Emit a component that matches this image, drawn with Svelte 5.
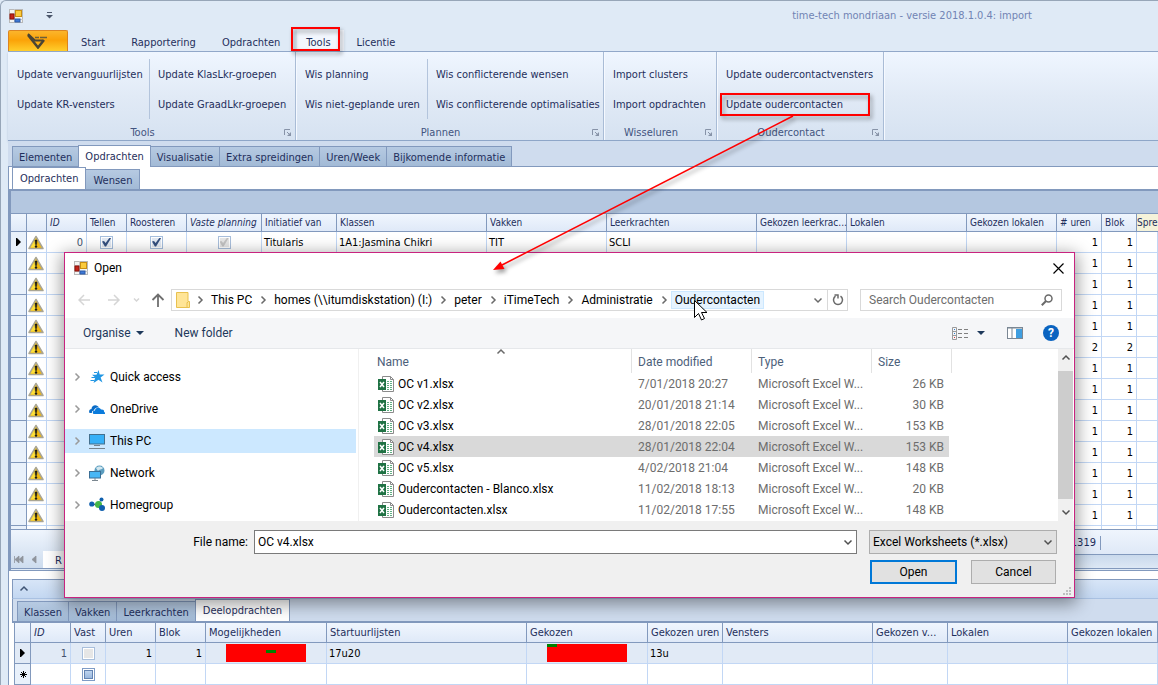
<script lang="ts">
	type RibbonColumn = { width: number; items: string[] };
	type RibbonGroup = { caption: string; columns: RibbonColumn[] };

	const menu = ["Start", "Rapportering", "Opdrachten", "Tools", "Licentie"];

	const groups: RibbonGroup[] = [
		{
			caption: "Tools",
			columns: [
				{ width: 141, items: ["Update vervanguurlijsten", "Update KR-vensters"] },
				{ width: 146, items: ["Update KlasLkr-groepen", "Update GraadLkr-groepen"] },
			],
		},
		{
			caption: "Plannen",
			columns: [
				{ width: 131, items: ["Wis planning", "Wis niet-geplande uren"] },
				{ width: 176, items: ["Wis conflicterende wensen", "Wis conflicterende optimalisaties"] },
			],
		},
		{
			caption: "Wisseluren",
			columns: [{ width: 112, items: ["Import clusters", "Import opdrachten"] }],
		},
		{
			caption: "Oudercontact",
			columns: [{ width: 166, items: ["Update oudercontactvensters", "Update oudercontacten"] }],
		},
	];

	const pages = ["Elementen", "Opdrachten", "Visualisatie", "Extra spreidingen", "Uren/Week", "Bijkomende informatie"];
	const subpages = ["Opdrachten", "Wensen"];
	const detailPages = ["Klassen", "Vakken", "Leerkrachten", "Deelopdrachten"];

	const columns = [
		{ title: "", width: 16 },
		{ title: "", width: 20 },
		{ title: "ID", width: 40, italic: true },
		{ title: "Tellen", width: 40 },
		{ title: "Roosteren", width: 60 },
		{ title: "Vaste planning", width: 75, italic: true },
		{ title: "Initiatief van", width: 75 },
		{ title: "Klassen", width: 150 },
		{ title: "Vakken", width: 120 },
		{ title: "Leerkrachten", width: 150 },
		{ title: "Gekozen leerkrac...", width: 90 },
		{ title: "Lokalen", width: 120 },
		{ title: "Gekozen lokalen", width: 90 },
		{ title: "# uren", width: 45 },
		{ title: "Blok", width: 35 },
		{ title: "Spre", width: 0, beige: true },
	];
	const moreRows = [1, 1, 1, 1, 2, 1, 1, 1, 1, 1, 1, 1, 1];

	const detailColumns = [
		{ title: "", width: 16 },
		{ title: "ID", width: 40, italic: true },
		{ title: "Vast", width: 35 },
		{ title: "Uren", width: 50 },
		{ title: "Blok", width: 50 },
		{ title: "Mogelijkheden", width: 121 },
		{ title: "Startuurlijsten", width: 200 },
		{ title: "Gekozen", width: 121 },
		{ title: "Gekozen uren", width: 75 },
		{ title: "Vensters", width: 150 },
		{ title: "Gekozen v...", width: 75 },
		{ title: "Lokalen", width: 120 },
		{ title: "Gekozen lokalen", width: 0 },
	];

	const crumbs = ["This PC", "homes (\\\\itumdiskstation) (I:)", "peter", "iTimeTech", "Administratie", "Oudercontacten"];
	const places = ["Quick access", "OneDrive", "This PC", "Network", "Homegroup"];

	const files = [
		{ name: "OC v1.xlsx", date: "7/01/2018 20:27", size: "26 KB" },
		{ name: "OC v2.xlsx", date: "20/01/2018 21:14", size: "30 KB" },
		{ name: "OC v3.xlsx", date: "28/01/2018 22:05", size: "153 KB" },
		{ name: "OC v4.xlsx", date: "28/01/2018 22:04", size: "153 KB" },
		{ name: "OC v5.xlsx", date: "4/02/2018 21:04", size: "148 KB" },
		{ name: "Oudercontacten - Blanco.xlsx", date: "11/02/2018 18:13", size: "20 KB" },
		{ name: "Oudercontacten.xlsx", date: "11/02/2018 17:55", size: "148 KB" },
	];

	let selected = $state("OC v4.xlsx");
</script>

{#snippet formIcon()}
	<svg class="form-icon" width="14" height="14" viewBox="0 0 14 14" aria-hidden="true">
		<rect x="0.5" y="0.5" width="13" height="13" fill="#f4f4f2" stroke="#b9b9b9" />
		<path d="M5.5 0v14M0 4.5h5M0 10.5h14" stroke="#c8c8c8" />
		<rect x="1" y="5" width="4" height="5" fill="#c3241a" stroke="#8e1108" />
		<rect x="6.5" y="1.500" width="6" height="6" fill="#fbcb3d" stroke="#c98f12" />
		<rect x="6" y="10" width="5" height="3" fill="#3f79d6" stroke="#2b5aa8" />
	</svg>
{/snippet}

{#snippet launcher()}
	<svg width="8" height="8" viewBox="0 0 8 8" aria-hidden="true">
		<path d="M0.500 6V0.500H6" fill="none" stroke="#8793a8" />
		<path d="M3 3l3 3" stroke="#8793a8" />
		<path d="M7 3v4H3z" fill="#8793a8" />
	</svg>
{/snippet}

{#snippet warning()}
	<svg width="16" height="15" viewBox="0 0 16 15" aria-hidden="true">
		<path d="M8 1.500L15 13.500H1z" fill="#f3b90c" stroke="#a9a595" stroke-width="1.500" stroke-linejoin="round" />
		<path d="M8 3L2.500 12.500H8z" fill="#fde03a" />
		<path d="M7 5h2l-0.400 4.500h-1.200z" fill="#1c1a12" stroke="#1c1a12" stroke-width="0.500" />
		<circle cx="8" cy="11.500" r="1.200" fill="#1c1a12" />
	</svg>
{/snippet}

{#snippet chevron(dir: string, color: string)}
	<svg class="chevron {dir}" width="10" height="10" viewBox="0 0 10 10" aria-hidden="true">
		<path d="M3.500 1.500L7 5L3.500 8.500" fill="none" stroke={color} stroke-width="1.500" />
	</svg>
{/snippet}

{#snippet tabs(names: string[], active: string, label: string)}
	<div class="tabs" role="tablist" aria-label={label}>
		{#each names as name}
			<button class="tab" class:active={name === active} role="tab" aria-selected={name === active}>{name}</button>
		{/each}
	</div>
{/snippet}

<div class="app">
	<header class="titlebar">
		{@render formIcon()}
		<svg class="qat" width="7" height="7" viewBox="0 0 7 7" aria-hidden="true">
			<path d="M1 0.500h5" stroke="#4b566b" />
			<path d="M0 3h7L3.500 6.500z" fill="#4b566b" />
		</svg>
		<span class="title">time-tech mondriaan - versie 2018.1.0.4: import</span>
	</header>

	<nav class="menu">
		<button class="app-button" aria-label="Menu">
			<svg width="22" height="16" viewBox="0 0 22 16" aria-hidden="true">
				<path d="M1 2L11 14.500L17 7" fill="none" stroke="#4a4534" stroke-width="2.500" />
				<path d="M1 1L8 7.500H16" fill="none" stroke="#4a4534" stroke-width="2" />
				<path d="M8 4.500h4M13 4.500h7" stroke="#6c5f3a" stroke-width="1.500" />
			</svg>
		</button>
		{#each menu as item}
			<button class="menu-item" class:active={item === "Tools"}>{item}</button>
		{/each}
	</nav>

	<section class="ribbon">
		{#each groups as group}
			<div class="group">
				<div class="group-columns">
					{#each group.columns as column}
						<div class="group-column" style="width: {column.width}px">
							{#each column.items as item}
								<button class="command">{item}</button>
							{/each}
						</div>
					{/each}
				</div>
				<div class="caption">
					<span>{group.caption}</span>
					{@render launcher()}
				</div>
			</div>
		{/each}
	</section>

	<div class="pages">{@render tabs(pages, "Opdrachten", "Pagina's")}</div>
	<div class="subpages">{@render tabs(subpages, "Opdrachten", "Onderdelen")}</div>

	<section class="grid">
		<div class="band"></div>
		<table class="data">
			<colgroup>
				{#each columns as column}
					<col style={column.width ? `width: ${column.width}px` : undefined} />
				{/each}
			</colgroup>
			<thead>
				<tr>
					{#each columns as column}
						<th class:italic={column.italic} class:beige={column.beige}>{column.title}</th>
					{/each}
				</tr>
			</thead>
			<tbody>
				<tr>
					<td class="indicator"><svg width="5" height="8" viewBox="0 0 5 8" aria-hidden="true"><path d="M0 0h1l4 4l-4 4H0z" /></svg></td>
					<td class="icon">{@render warning()}</td>
					<td class="num dim">0</td>
					<td class="check"><input type="checkbox" checked aria-label="Tellen" /></td>
					<td class="check"><input type="checkbox" checked aria-label="Roosteren" /></td>
					<td class="check"><input type="checkbox" checked disabled aria-label="Vaste planning" /></td>
					<td>Titularis</td>
					<td>1A1:Jasmina Chikri</td>
					<td>TIT</td>
					<td>SCLI</td>
					<td></td>
					<td></td>
					<td></td>
					<td class="num">1</td>
					<td class="num">1</td>
					<td></td>
				</tr>
				{#each moreRows as hours}
					<tr>
						<td class="indicator"></td>
						<td class="icon">{@render warning()}</td>
						{#each { length: 11 } as _}<td></td>{/each}
						<td class="num">{hours}</td>
						<td class="num">{hours}</td>
						<td></td>
					</tr>
				{/each}
				<tr class="partial">
					<td class="indicator"></td>
					{#each { length: 15 } as _}<td></td>{/each}
				</tr>
			</tbody>
		</table>
		<footer>
			<div class="navigator">
				<svg width="26" height="9" viewBox="0 0 26 9" aria-hidden="true">
					<path d="M0.500 1v7M5 1v7L1 4.500zM9 1v7L5 4.500zM22 1v7L18 4.500z" fill="#8f949c" stroke="#8f949c" stroke-width="0.800" />
				</svg>
				<span class="record">R</span>
			</div>
			<div class="totals">
				<span class="total">1319</span>
			</div>
		</footer>
	</section>

	<section class="detail">
		<header>{@render chevron("up", "#3f5474")}</header>
		<div class="detail-tabs">{@render tabs(detailPages, "Deelopdrachten", "Details")}</div>
		<table class="data">
			<colgroup>
				{#each detailColumns as column}
					<col style={column.width ? `width: ${column.width}px` : undefined} />
				{/each}
			</colgroup>
			<thead>
				<tr>
					{#each detailColumns as column}
						<th class:italic={column.italic}>{column.title}</th>
					{/each}
				</tr>
			</thead>
			<tbody>
				<tr class="current">
					<td class="indicator"><svg width="5" height="8" viewBox="0 0 5 8" aria-hidden="true"><path d="M0 0h1l4 4l-4 4H0z" /></svg></td>
					<td class="num dim">1</td>
					<td class="check"><input type="checkbox" disabled aria-label="Vast" /></td>
					<td class="num">1</td>
					<td class="num">1</td>
					<td class="bar"><svg width="80" height="18" aria-hidden="true"><rect width="80" height="18" fill="#f00" /><rect x="40" y="6" width="10" height="3" fill="#008000" /></svg></td>
					<td>17u20</td>
					<td class="bar"><svg width="80" height="18" aria-hidden="true"><rect width="80" height="18" fill="#f00" /><rect width="10" height="3" fill="#008000" /></svg></td>
					<td>13u</td>
					<td></td>
					<td></td>
					<td></td>
					<td></td>
				</tr>
				<tr>
					<td class="indicator"><svg width="7" height="7" viewBox="0 0 7 7" aria-hidden="true"><path d="M3.500 0v7M0 3.500h7M1 1l5 5M6 1L1 6" stroke="#000" /></svg></td>
					<td></td>
					<td class="check"><input class="blank" type="checkbox" aria-label="Vast" /></td>
					{#each { length: 10 } as _}<td></td>{/each}
				</tr>
			</tbody>
		</table>
	</section>

	<div class="dialog" role="dialog" aria-label="Open">
		<div class="dialog-title">
			{@render formIcon()}
			<span>Open</span>
			<button class="close" aria-label="Close">
				<svg width="11" height="11" viewBox="0 0 11 11"><path d="M0.500 0.500l10 10M10.500 0.500l-10 10" stroke="#000" stroke-width="1.200" /></svg>
			</button>
		</div>

		<div class="address-row">
			<div class="history">
				<svg width="88" height="14" viewBox="0 0 88 14" aria-hidden="true">
					<path d="M6 2L1 7l5 5M1 7h11M36 2l5 5l-5 5M41 7H30" fill="none" stroke="#d5d5d5" stroke-width="1.500" />
					<path d="M56 5.500l2.500 2.500L61 5.500" fill="none" stroke="#d5d5d5" stroke-width="1.500" />
					<path d="M74.500 7L80 1.500L85.500 7M80 2v12" fill="none" stroke="#6f6f6f" stroke-width="1.800" />
				</svg>
			</div>
			<div class="address">
				<svg class="folder" width="14" height="16" viewBox="0 0 14 16" aria-hidden="true">
					<path d="M0.500 0.500h11.500v9h1.500v6H0.500z" fill="#ffe597" stroke="#e8c14f" />
					<path d="M11 15v-4.500h1" fill="none" stroke="#e8c14f" />
				</svg>
				{#each crumbs as crumb, i}
					{@render chevron("right", "#6a6a6a")}
					<a href="#top" class:hover={i === crumbs.length - 1}>{crumb}</a>
				{/each}
				<span class="spacer"></span>
				{@render chevron("down", "#6a6a6a")}
				<button class="refresh" aria-label="Refresh">
					<svg width="12" height="12" viewBox="0 0 12 12"><path d="M8.500 2.200A4.500 4.500 0 1 1 3.500 2.200M2.500 1h3.500v3.500" fill="none" stroke="#6a6a6a" stroke-width="1.500" /></svg>
				</button>
			</div>
			<div class="search">
				<input type="search" placeholder="Search Oudercontacten" aria-label="Search Oudercontacten" />
				<svg width="12" height="12" viewBox="0 0 12 12" aria-hidden="true">
					<circle cx="7.500" cy="4.500" r="3.500" fill="none" stroke="#6a6a6a" stroke-width="1.500" />
					<path d="M5 7L0.800 11.200" stroke="#6a6a6a" stroke-width="2" />
				</svg>
			</div>
		</div>

		<div class="toolbar">
			<button class="organise">Organise <svg width="8" height="4" viewBox="0 0 8 4" aria-hidden="true"><path d="M0 0h8L4 4z" fill="#1e395b" /></svg></button>
			<button>New folder</button>
			<span class="spacer"></span>
			<svg width="16" height="13" viewBox="0 0 16 13" aria-hidden="true">
				<path d="M0.500 0.500h4v12h-4zM0.500 4.500h4M0.500 8.500h4" fill="none" stroke="#9a9a9a" />
				<path d="M2 2.500h1M2 6.500h1" stroke="#2f7fd0" /><path d="M2 10.500h1" stroke="#d33" />
				<path d="M6 2.500h4M12 2.500h4M6 6.500h4M12 6.500h4M6 10.500h4M12 10.500h4" stroke="#808080" />
			</svg>
			<svg class="drop" width="8" height="4" viewBox="0 0 8 4" aria-hidden="true"><path d="M0 0h8L4 4z" fill="#1e395b" /></svg>
			<svg class="preview" width="16" height="12" viewBox="0 0 16 12" aria-hidden="true">
				<rect x="0.500" y="0.500" width="15" height="11" fill="#fff" stroke="#7b8794" />
				<path d="M0 1h16M5 1v10" stroke="#7b8794" />
				<rect x="9" y="2" width="6" height="9" fill="#3f9ee0" />
			</svg>
			<button class="help" aria-label="Help">?</button>
		</div>

		<div class="browser">
			<ul class="places">
				{#each places as place}
					<li class:current={place === "This PC"}>
						{@render chevron("right", "#9a9a9a")}
						<svg width="16" height="16" viewBox="0 0 16 16" aria-hidden="true">
							{#if place === "Quick access"}
								<path d="M9.500 1l1.200 4.500h4.800l-3.900 2.900l1.900 5.100L9.500 10.800L4.500 14l1.800-5.400L3 5.800h4.500z" fill="#2196e3" />
								<path d="M5 3.500h3M2.500 8.500h4M1.500 11.500h4" stroke="#2196e3" />
							{:else if place === "OneDrive"}
								<path d="M0.500 12c-1-2 0-4 2-4c0-3 3.500-5 6-3c1 0.500 1 1 1.500 1.500c-3-0.500-5 1-5 3c-1.500 0-2.500 1.500-2 2.500z" fill="#0a6cc7" />
								<path d="M4.500 13c-1.500-1.500-0.500-3.500 1.500-3.500c0-3 4.500-4 6-1c2.500-0.500 3.500 1 3 2.500c1.500 0.500 1.200 2 0.500 2z" fill="#0a7bdc" />
							{:else if place === "This PC"}
								<rect x="0.500" y="1.500" width="15" height="9.500" fill="#37b0f7" stroke="#44708e" />
								<path d="M5 12.500h6M0 15.500h16" stroke="#76838c" />
							{:else if place === "Network"}
								<circle cx="10.500" cy="5.500" r="5" fill="#5b9dbf" />
								<path d="M7 3c2-2 5-2 7 0c-1 2-4 1-5 3" fill="#d3e7ef" />
								<rect x="0.500" y="6.500" width="11" height="6.500" fill="#49b7f5" stroke="#3b6f96" />
								<path d="M6 13v2M3 15.500h6" stroke="#7b8790" />
							{:else}
								<path d="M3 7l7 0l3 4M10 7l2-5" stroke="#9ac" />
								<circle cx="2.800" cy="7" r="2.600" fill="#0f5fae" />
								<circle cx="12.500" cy="2.500" r="2" fill="#0f5fae" />
								<circle cx="9.500" cy="7.500" r="3.500" fill="#45b649" />
								<circle cx="13" cy="11" r="3" fill="#0f5fae" />
							{/if}
						</svg>
						<span>{place}</span>
					</li>
				{/each}
			</ul>

			<div class="listing">
				<table class="files">
					<colgroup>
						<col class="c-name" />
						<col class="c-date" />
						<col class="c-type" />
						<col class="c-size" />
					</colgroup>
					<thead>
						<tr>
							<th><div class="sorted"><span>Name</span>{@render chevron("up", "#6a6a6a")}</div></th>
							<th>Date modified</th>
							<th>Type</th>
							<th>Size</th>
						</tr>
					</thead>
					<tbody>
						{#each files as file (file.name)}
							<tr class:selected={file.name === selected} onclick={() => (selected = file.name)}>
								<td>
									<div class="file">
										<svg width="16" height="16" viewBox="0 0 16 16" aria-hidden="true">
											<path d="M4.500 0.500h8l3 3v12h-11z" fill="#fff" stroke="#8b8b8b" />
											<path d="M12.500 0.500v3h3" fill="none" stroke="#8b8b8b" />
											<path d="M9 5.500h5M9 7.500h5M9 9.500h5M9 11.500h5M9 13.500h5" stroke="#5fae81" stroke-dasharray="2 1" />
											<rect y="3" width="8" height="11" fill="#1f7244" />
											<path d="M2 6l4 5M6 6l-4 5" stroke="#fff" stroke-width="1.500" />
										</svg>
										{file.name}
									</div>
								</td>
								<td>{file.date}</td>
								<td>Microsoft Excel W...</td>
								<td class="size">{file.size}</td>
							</tr>
						{/each}
					</tbody>
				</table>
				<div class="scrollbar">
					{@render chevron("up", "#505050")}
					<div class="thumb"></div>
					{@render chevron("down", "#505050")}
				</div>
			</div>
		</div>

		<form class="bottom" onsubmit={(e) => e.preventDefault()}>
			<label for="file-name">File name:</label>
			<div class="combo">
				<input id="file-name" type="text" bind:value={selected} />
				{@render chevron("down", "#505050")}
			</div>
			<div class="filter">
				<select aria-label="File type"><option>Excel Worksheets (*.xlsx)</option></select>
				{@render chevron("down", "#505050")}
			</div>
			<div class="actions">
				<button class="open" type="submit">Open</button>
				<button type="button">Cancel</button>
			</div>
			<svg class="grip" width="8" height="8" viewBox="0 0 8 8" aria-hidden="true">
				<path d="M6 0h2v2h-2zM3 3h2v2h-2zM6 3h2v2h-2zM0 6h2v2h-2zM3 6h2v2h-2zM6 6h2v2h-2z" fill="#bfbfbf" />
			</svg>
		</form>
	</div>

	<svg class="notes" width="900" height="340" viewBox="0 0 900 340" aria-hidden="true">
		<g class="marks">
			<rect x="292" y="28" width="47" height="22" fill="none" stroke="#f00" stroke-width="2" />
			<rect x="721" y="94" width="148" height="21" fill="none" stroke="#f00" stroke-width="2" />
			<path d="M793 116L502 265" stroke="#f00" stroke-width="1.500" />
			<path d="M493 270L500.500 261.500L504.500 269z" fill="#f00" />
		</g>
		<path d="M694.500 300.500v17l4-4l3 6.500l3-1.500l-3-6h5.500z" fill="#fff" stroke="#000" />
	</svg>
</div>

<style>
	:global(body) {
		background: #dfeaf6;
	}

	.app {
		position: relative;
		min-height: 100vh;
		box-sizing: border-box;
		overflow: hidden;
		border-top: 1px solid #97a6b8;
		border-left: 1px solid #97a6b8;
		border-top-left-radius: 6px;
		padding-left: 7px;
		background: #dfeaf6;
		color: #1f2f5c;
		font: 11px/14px "DejaVu Sans Condensed", "DejaVu Sans", sans-serif;
	}

	button,
	input,
	select {
		font: inherit;
		color: inherit;
	}

	button {
		border: 0;
		padding: 0;
		background: none;
		white-space: nowrap;
	}

	svg {
		display: block;
		flex: none;
	}

	.titlebar {
		display: flex;
		align-items: center;
		height: 29px;
		padding: 0 126px 0 1px;
		color: #7184b4;
	}

	.qat {
		margin-left: 23px;
	}

	.title {
		margin-left: auto;
	}

	.menu {
		display: flex;
		height: 21px;
		border-bottom: 1px solid #8ea6c8;
	}

	.app-button {
		display: flex;
		justify-content: center;
		align-items: center;
		width: 60px;
		border: 1px solid #dc8420;
		border-bottom: 0;
		border-radius: 2px 2px 0 0;
		background: linear-gradient(#fbb52c, #fba208 45%, #ffce2c);
	}

	.menu-item {
		padding: 4px 13px 0;
	}

	.menu-item.active {
		background: linear-gradient(90deg, transparent 4px, #f2f6fd 4px);
	}

	.ribbon {
		display: flex;
		height: 88px;
		border-bottom: 1px solid #8ea6c8;
		background: linear-gradient(#eff6ff, #e1eaf6 50%, #d6e2f1);
		box-shadow: 0 1px 2px #b4c4d9;
	}

	.group {
		display: flex;
		flex-direction: column;
		border-right: 1px solid #a9bcd6;
		box-shadow: 1px 0 #f5f9ff;
	}

	.group-columns {
		display: flex;
		flex: 1;
		padding-top: 7px;
	}

	.group-column {
		display: flex;
		flex-direction: column;
		align-items: flex-start;
		height: 60px;
		box-sizing: border-box;
		padding-left: 9px;
	}

	.group-column + .group-column {
		padding-left: 8px;
		border-left: 1px solid #b3c4dc;
	}

	.command {
		height: 30px;
		padding-top: 2px;
	}

	.caption {
		display: flex;
		align-items: center;
		gap: 7px;
		height: 18px;
		padding-right: 3px;
		color: #43547f;
	}

	.caption span {
		flex: 1;
		padding-top: 3px;
		text-align: center;
	}

	.caption svg {
		margin-top: 4px;
	}

	.tabs {
		display: flex;
		align-items: flex-end;
	}

	.tab {
		height: 20px;
		padding: 2px 6px 0;
		border: 1px solid #8299bd;
		border-bottom: 0;
		border-right-width: 0;
		background: linear-gradient(#b6cae2, #a2bad6);
		color: #1f2f5c;
	}

	.tab:last-child {
		border-right-width: 1px;
	}

	.tab.active {
		height: 22px;
		padding: 0 6px;
		border-right-width: 1px;
		background: #fff;
	}

	.tab.active + .tab {
		border-left-width: 0;
	}

	.pages {
		padding: 4px 0 0 4px;
		background: #cfdcee;
		border-bottom: 1px solid #8299bd;
	}

	.subpages {
		padding-left: 3px;
		background: #fff;
		border-left: 1px solid #8299bd;
		border-bottom: 2px solid #8299bd;
	}

	.subpages .tab,
	.detail-tabs .tab.active {
		padding-left: 7px;
		padding-right: 7px;
	}

	.pages .tab.active {
		margin-bottom: -1px;
	}

	.grid {
		border-left: 3px solid #8299bd;
	}

	.band {
		height: 22px;
		background: #b4c7e0;
		border-bottom: 1px solid #8299bd;
	}

	.data {
		width: 100%;
		table-layout: fixed;
		border-collapse: separate;
		border-spacing: 0;
		background: #fff;
	}

	.data th {
		box-sizing: border-box;
		height: 18px;
		padding: 0 0 0 3px;
		border-right: 1px solid #8299bd;
		border-bottom: 1px solid #8299bd;
		background: linear-gradient(#f0f6fe, #dfe9f8);
		font-size: 10px;
		line-height: 14px;
		font-weight: normal;
		text-align: left;
		white-space: nowrap;
	}

	.data th.italic {
		font-style: italic;
	}

	.data th.beige {
		padding-left: 0;
		border-right: 0;
		background: #f5f3da;
	}

	.data td {
		box-sizing: border-box;
		height: 21px;
		padding: 1px 2px 0;
		border-right: 1px solid #c2d7f5;
		border-bottom: 1px solid #c2d7f5;
		color: #000;
		white-space: nowrap;
	}

	.data td.indicator {
		padding: 0 4px 0 5px;
		border-color: #8299bd;
		background: #e9f1fb;
	}

	.data td.icon {
		padding: 0 1px;
	}

	.data td.check,
	.data td.bar {
		padding-top: 0;
	}

	.data td.num {
		padding-right: 3px;
		text-align: right;
	}

	.data td.dim {
		color: #44536f;
	}

	.data .partial td {
		height: 3px;
		padding: 0;
		border-bottom: 0;
	}

	.check input {
		display: grid;
		place-items: center;
		appearance: none;
		box-sizing: border-box;
		width: 13px;
		height: 13px;
		margin: 0 auto;
		border: 1px solid #a6bfde;
		background: #e2e9f3;
		box-shadow: inset 0 0 0 1px #fff;
	}

	.check input:checked::before {
		content: "";
		width: 9px;
		height: 9px;
		background: #34507f;
		clip-path: polygon(0 45%, 22% 38%, 40% 62%, 85% 0, 100% 8%, 45% 100%, 32% 100%);
	}

	.check input:disabled {
		border-color: #a9bfdc;
		background: #e6e6e6;
	}

	.check input:disabled::before {
		background: #c2c2c2;
	}

	.check input.blank {
		border-color: #7f9cc6;
		background: linear-gradient(#c9dcf3, #8fb0da);
		box-shadow: inset 0 0 0 1px #fff, inset 0 0 0 2px #6484b2;
	}

	footer {
		display: flex;
		height: 38px;
		border-top: 1px solid #8299bd;
		border-bottom: 3px double #8299bd;
	}

	.navigator {
		display: flex;
		align-items: flex-end;
		width: 400px;
		padding-left: 3px;
		background: linear-gradient(#eff5fd, #cddcee);
	}

	.navigator svg {
		margin-bottom: 4px;
	}

	.record {
		flex: 1;
		margin-left: 3px;
		padding: 3px 0 0 12px;
		background: #fff;
	}

	.totals {
		flex: 1;
		background: linear-gradient(#eff5fd, #dfe9f7 24px, #8299bd 24px, #8299bd 25px, #c9d9ec 25px, #dde8f5);
	}

	.total {
		float: right;
		margin: 6px 57px 0 0;
		padding-right: 4px;
		border-right: 1px solid #8299bd;
	}

	.detail {
		padding: 8px 0 0 4px;
		background: #fff;
		border-left: 1px solid #8299bd;
	}

	.detail header {
		display: flex;
		align-items: center;
		height: 18px;
		margin-left: -1px;
		padding-left: 6px;
		border: 1px solid #8299bd;
		border-bottom-color: #a9c1e2;
		border-right: 0;
		background: linear-gradient(#d7e5f7, #c3d7f1);
	}

	.detail-tabs {
		margin-left: -1px;
		padding: 0 0 0 4px;
		border-left: 1px solid #8299bd;
		border-bottom: 2px solid #8299bd;
		background: #cfdcee;
	}

	.detail .data {
		width: calc(100% - 1px);
		margin-left: 1px;
		border-left: 1px solid #8299bd;
	}

	.detail .data th {
		height: 20px;
		font-size: 11px;
	}

	.detail .data .current td {
		background: #e1eaf6;
	}

	.data td.bar svg {
		margin: 0 auto;
	}

	/* file dialog */

	.dialog {
		position: absolute;
		top: 251px;
		left: 63px;
		right: 83px;
		display: flex;
		flex-direction: column;
		border: 1px solid #c8237f;
		background: #fff;
		box-shadow: 0 4px 16px 2px rgba(0, 0, 0, 0.4);
		color: #000;
		font: 12px/16px Roboto, "Open Sans", sans-serif;
	}

	.dialog-title {
		display: flex;
		align-items: center;
		gap: 6px;
		height: 30px;
		padding: 0 10px 0 9px;
	}

	.close {
		margin-left: auto;
	}

	.address-row {
		display: flex;
		height: 22px;
		margin: 6px 12px 7px 13px;
	}

	.history {
		display: flex;
		align-items: center;
		width: 93px;
	}

	.address,
	.search {
		display: flex;
		align-items: center;
		box-sizing: border-box;
		border: 1px solid #d9d9d9;
	}

	.address {
		flex: 1;
		padding-left: 4px;
	}

	.address a {
		padding: 0 3px;
		border: 1px solid transparent;
		color: inherit;
		text-decoration: none;
		white-space: nowrap;
	}

	.address a.hover {
		border-color: #cce8ff;
		background: #e5f3ff;
	}

	.address .chevron {
		margin: 0 2px;
	}

	.address .chevron.down {
		margin-right: 4px;
	}

	.address .folder {
		margin-right: 3px;
	}

	.spacer {
		flex: 1;
	}

	.refresh {
		display: flex;
		justify-content: center;
		align-items: center;
		align-self: stretch;
		width: 20px;
		border-left: 1px solid #d9d9d9;
	}

	.search {
		width: 202px;
		margin-left: 12px;
		padding: 0 8px;
	}

	.search input {
		flex: 1;
		min-width: 0;
		padding: 0;
		border: 0;
		outline: 0;
		background: none;
		appearance: none;
	}

	.search input::placeholder {
		color: #6d6d6d;
	}

	.toolbar {
		display: flex;
		align-items: center;
		height: 30px;
		padding: 0 15px 0 18px;
		border-bottom: 1px solid #e6e8eb;
		background: #f5f6f8;
		color: #1e395b;
	}

	.organise {
		display: flex;
		align-items: center;
		gap: 5px;
		margin-right: 31px;
	}

	.drop {
		margin: 0 22px 0 9px;
	}

	.help {
		width: 16px;
		height: 16px;
		margin-left: 20px;
		border-radius: 50%;
		background: #0a63c0;
		color: #fff;
		font-weight: bold;
	}

	.browser {
		display: flex;
		height: 172px;
	}

	.places {
		width: 293px;
		margin: 0;
		padding: 16px 0 0;
		border-right: 1px solid #f0f0f0;
		list-style: none;
	}

	.places li {
		display: flex;
		align-items: center;
		height: 24px;
		margin: 0 2px 8px 0;
		padding-left: 7px;
	}

	.places li svg + svg {
		margin: 0 5px 0 7px;
	}

	.places li.current {
		background: #cce8ff;
	}

	.listing {
		display: flex;
		flex: 1;
		justify-content: space-between;
		padding-left: 15px;
	}

	.files {
		width: 578px;
		height: 171px;
		table-layout: fixed;
		border-collapse: separate;
		border-spacing: 0;
	}

	.c-name {
		width: 258px;
	}

	.c-date,
	.c-type {
		width: 120px;
	}

	.c-size {
		width: 80px;
	}

	.files th {
		box-sizing: border-box;
		height: 24px;
		padding: 2px 0 0 6px;
		border-right: 1px solid #e2e2e2;
		color: #4c607a;
		font-weight: normal;
		text-align: left;
	}

	.files th:first-child {
		padding-left: 3px;
	}

	.sorted {
		display: flex;
	}

	.sorted .chevron {
		margin-left: 87px;
		margin-top: -7px;
	}

	.files td {
		height: 21px;
		padding: 0 0 0 6px;
		color: #6d6d6d;
		white-space: nowrap;
	}

	.files td:first-child {
		padding-left: 4px;
		color: #000;
	}

	.files td.size {
		padding-right: 5px;
		border-right: 3px solid transparent;
		background-clip: padding-box;
		text-align: right;
	}

	.files .selected td {
		background-color: #d9d9d9;
	}

	.file {
		display: flex;
		align-items: center;
		gap: 4px;
	}

	.scrollbar {
		display: flex;
		flex-direction: column;
		align-items: center;
		gap: 8px;
		width: 15px;
		margin-right: 1px;
		padding: 4px 0;
		box-sizing: border-box;
		background: #f0f0f0;
	}

	.thumb {
		flex: 1;
		width: 100%;
		background: #cdcdcd;
	}

	.chevron.up {
		transform: rotate(-90deg);
	}

	.chevron.down {
		transform: rotate(90deg);
	}

	.bottom {
		display: grid;
		grid-template-columns: 183px 1fr 188px;
		column-gap: 6px;
		row-gap: 6px;
		padding: 9px 17px 13px 0;
		background: #f0f0f0;
		position: relative;
	}

	.bottom label {
		padding-top: 4px;
		text-align: right;
	}

	.combo,
	.filter {
		display: grid;
		align-items: center;
	}

	.combo {
		margin-right: 6px;
	}

	.combo > *,
	.filter > * {
		grid-area: 1 / 1;
	}

	.combo .chevron,
	.filter .chevron {
		justify-self: end;
		margin-right: 4px;
		pointer-events: none;
	}

	.combo input,
	.filter select {
		appearance: none;
		box-sizing: border-box;
		width: 100%;
		height: 24px;
		padding: 0 3px;
		border: 1px solid #7a7a7a;
		border-radius: 0;
		background: #fff;
	}

	.filter select {
		border-color: #adadad;
		background: #e1e1e1;
	}

	.actions {
		grid-column: 3;
		display: flex;
		gap: 14px;
		padding: 0 1px;
	}

	.actions button {
		flex: 1;
		box-sizing: border-box;
		height: 24px;
		border: 1px solid #adadad;
		background: #e1e1e1;
	}

	.actions .open {
		border: 2px solid #0078d7;
	}

	.grip {
		position: absolute;
		right: 3px;
		bottom: 2px;
	}

	.notes {
		position: absolute;
		top: -1px;
		left: -1px;
		pointer-events: none;
	}

	.marks {
		filter: drop-shadow(2px 3px 2px rgba(0, 0, 0, 0.4));
	}
</style>
